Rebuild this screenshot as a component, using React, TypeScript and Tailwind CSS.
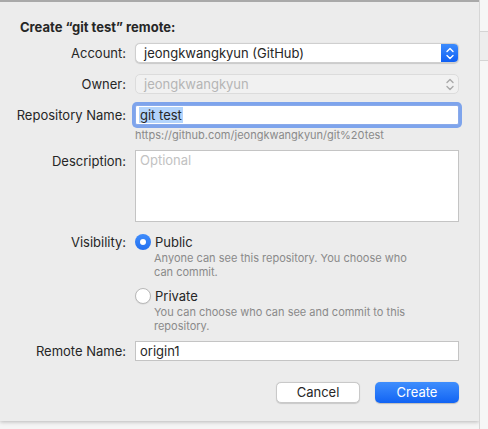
import React from 'react';

const font = { fontFamily: 'Inter, "Liberation Sans", Arial, sans-serif' };

const Stepper = ({ color }: { color: string }) => (
  <svg width="8" height="13" viewBox="0 0 8 13" fill="none">
    <path d="M1 4.5 L4 1.5 L7 4.5" stroke={color} strokeWidth="1.4" strokeLinecap="round" strokeLinejoin="round" />
    <path d="M1 8.5 L4 11.5 L7 8.5" stroke={color} strokeWidth="1.4" strokeLinecap="round" strokeLinejoin="round" />
  </svg>
);

const Label = ({ children, className = '' }: { children: React.ReactNode; className?: string }) => (
  <div className={`flex justify-end whitespace-nowrap text-[13px] leading-[16px] text-[#262626] ${className}`}>{children}</div>
);

export default function App() {
  return (
    <div className="w-[488px] h-[429px] bg-[#f5f5f5] flex overflow-hidden" style={font}>
      {/* Sheet */}
      <div className="w-[479px] h-[421px] shrink-0 bg-[#ececec] border-t-2 border-[#a9a9a9] shadow-[0_1px_4px_rgba(0,0,0,0.25)] pt-[17px] pl-[20px] pr-[20px] flex flex-col">
        <div className="text-[13px] leading-[16px] font-bold text-[#262626]">Create “git test” remote:</div>

        <div className="grid grid-cols-[106px_1fr] gap-x-[9px] mt-[8px] items-start">
          {/* Account */}
          <Label className="self-center">Account:</Label>
          <div className="h-[20px] flex items-stretch bg-white rounded-[5px] border border-[#cfcfcf] shadow-[0_0.5px_1px_rgba(0,0,0,0.15)] overflow-hidden">
            <div className="flex-1 text-[13px] leading-[18px] text-[#262626] pl-[8px]">jeongkwangkyun (GitHub)</div>
            <div className="w-[17px] bg-gradient-to-b from-[#3c8bfd] to-[#0f5ff4] flex items-center justify-center">
              <Stepper color="#ffffff" />
            </div>
          </div>

          {/* Owner */}
          <Label className="self-center mt-[11px]">Owner:</Label>
          <div className="mt-[11px] h-[20px] flex items-stretch bg-[#f1f1f1] rounded-[5px] border border-[#dcdcdc]">
            <div className="flex-1 text-[13px] leading-[18px] text-[#b5b5b5] pl-[8px]">jeongkwangkyun</div>
            <div className="w-[17px] flex items-center justify-center">
              <Stepper color="#a8a8a8" />
            </div>
          </div>

          {/* Repository name */}
          <Label className="self-center mt-[11px]">Repository Name:</Label>
          <div className="mt-[11px] h-[20px] bg-white rounded-[2px] ring-[3px] ring-[#7ea4ec] border border-[#8aaaea] flex items-center pl-[3px]">
            <span className="text-[13px] leading-[16px] text-[#262626] bg-[#b3d4fc] px-[1px]">git test</span>
          </div>
          <div />
          <div className="mt-[4px] text-[11px] leading-[13px] text-[#8a8a8a]">https://github.com/jeongkwangkyun/git%20test</div>

          {/* Description */}
          <Label className="mt-[11px]">Description:</Label>
          <div className="mt-[8px] h-[72px] bg-white border border-[#c4c4c4] pl-[4px] pt-[1px]">
            <div className="text-[13px] leading-[16px] text-[#c2c2c2]">Optional</div>
          </div>

          {/* Visibility */}
          <Label className="mt-[12px]">Visibility:</Label>
          <div className="mt-[12px] flex flex-col">
            <div className="flex items-center gap-[4px] h-[16px]">
              <div className="w-[16px] h-[16px] rounded-full bg-gradient-to-b from-[#3f8cfb] to-[#2370f0] flex items-center justify-center">
                <div className="w-[6px] h-[6px] rounded-full bg-white" />
              </div>
              <span className="text-[13px] leading-[16px] text-[#262626]">Public</span>
            </div>
            <div className="pl-[19px] mt-[1px] text-[11px] leading-[14px] text-[#8a8a8a] w-[290px]">
              Anyone can see this repository. You choose who can commit.
            </div>

            <div className="flex items-center gap-[4px] h-[16px] mt-[9px]">
              <div className="w-[16px] h-[16px] rounded-full bg-white border border-[#b9b9b9] shadow-[0_0.5px_1px_rgba(0,0,0,0.1)]" />
              <span className="text-[13px] leading-[16px] text-[#262626]">Private</span>
            </div>
            <div className="pl-[19px] mt-[1px] text-[11px] leading-[14px] text-[#8a8a8a] w-[290px]">
              You can choose who can see and commit to this repository.
            </div>
          </div>

          {/* Remote name */}
          <Label className="self-center mt-[8px]">Remote Name:</Label>
          <div className="mt-[8px] h-[20px] bg-white border border-[#c4c4c4] flex items-center pl-[4px]">
            <span className="text-[13px] leading-[16px] text-[#262626]">origin1</span>
          </div>
        </div>

        <div className="flex justify-end gap-[15px] mt-[21px]">
          <div className="w-[84px] h-[21px] bg-white rounded-[5px] border border-[#c9c9c9] shadow-[0_0.5px_1px_rgba(0,0,0,0.15)] flex items-center justify-center text-[13px] text-[#262626]">
            Cancel
          </div>
          <div className="w-[84px] h-[21px] rounded-[5px] bg-gradient-to-b from-[#3f8efd] to-[#1063f3] shadow-[0_0.5px_1px_rgba(0,0,0,0.2)] flex items-center justify-center text-[13px] text-white">
            Create
          </div>
        </div>
      </div>

      {/* Background window behind the sheet */}
      <div className="flex-1 flex flex-col border-l border-[#d6d6d6] bg-[#f6f6f6]">
        <div className="h-[32px] border-b border-[#d4d4d4]" />
        <div className="h-[29px] bg-[#ededed] border-b border-[#d4d4d4]" />
      </div>
    </div>
  );
}
